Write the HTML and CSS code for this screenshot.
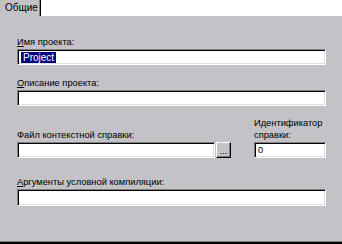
FILE: index.html
```html
<!DOCTYPE html>
<html lang="ru">
<head>
<meta charset="UTF-8">
<title>Свойства проекта</title>
<link rel="stylesheet" href="styles.css">
</head>
<body>
<div class="tabbar">
    <div class="tab">Общие</div>
</div>
<div class="panel">
    <div class="field">
        <div class="label"><u>И</u>мя проекта:</div>
        <div class="input"><span class="sel">Project</span></div>
    </div>
    <div class="field gap">
        <div class="label"><u>О</u>писание проекта:</div>
        <div class="input"></div>
    </div>
    <div class="row">
        <div class="col-file">
            <div class="label">Файл контекстной справки:</div>
            <div class="browse">
                <div class="input"></div>
                <div class="btn">...</div>
            </div>
        </div>
        <div class="col-id">
            <div class="label">Идентификатор<br>справки:</div>
            <div class="input">0</div>
        </div>
    </div>
    <div class="field gap-big">
        <div class="label"><u>А</u>ргументы условной компиляции:</div>
        <div class="input tall"></div>
    </div>
</div>
</body>
</html>
```

FILE: styles.css
```css
body {
    margin: 0;
    width: 342px;
    height: 244px;
    overflow: hidden;
    font-family: "Liberation Sans", Arial, sans-serif;
    font-size: 9.3px;
    color: #000;
    background: #c4c2c7;
}
.tabbar {
    display: flex;
    height: 16px;
    background: #fff;
}
.tab {
    width: 41px;
    box-sizing: border-box;
    padding: 2px 0 0 5px;
    font-size: 10px;
    line-height: 12px;
    background: #c4c2c7;
    border-right: 1px solid #000;
    box-shadow: inset -1px 0 #808080;
}
.panel {
    height: 228px;
    box-sizing: border-box;
    padding: 20px 16px 0 17px;
    background: #c4c2c7;
    border-bottom: 2px solid #000;
    box-shadow: inset 0 -1px #808080;
}
.label {
    line-height: 12px;
    margin-bottom: 1px;
    white-space: nowrap;
}
.label u {
    text-decoration: underline;
}
.input {
    height: 16px;
    box-sizing: border-box;
    padding: 2px 0 0 3px;
    line-height: 11px;
    background: #fff;
    border: 1px solid;
    border-color: #808080 #fff #fff #808080;
    box-shadow: inset 1px 1px #000, inset -1px -1px #dfdfdf;
}
.input.tall {
    height: 17px;
}
.sel {
    display: inline-block;
    background: #000080;
    color: #fff;
    padding: 0 2px;
    font-size: 10px;
}
.gap {
    margin-top: 12px;
}
.row {
    display: flex;
    align-items: flex-end;
    margin-top: 11px;
}
.col-file {
    width: 214px;
}
.browse {
    display: flex;
    gap: 1px;
}
.browse .input {
    flex: 1;
}
.btn {
    width: 15px;
    height: 16px;
    box-sizing: border-box;
    text-align: center;
    line-height: 16px;
    background: #c4c2c7;
    border: 1px solid;
    border-color: #fff #000 #000 #fff;
    box-shadow: inset -1px -1px #808080;
}
.col-id {
    width: 72px;
    margin-left: auto;
}
.gap-big {
    margin-top: 18px;
}
```
